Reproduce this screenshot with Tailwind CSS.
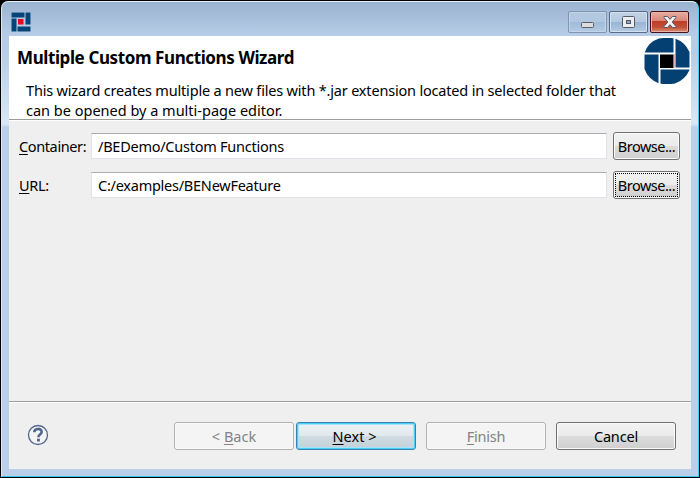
<!DOCTYPE html>
<html lang="en">
<head>
<meta charset="utf-8">
<title>Multiple Custom Functions Wizard</title>
<script src="https://cdn.jsdelivr.net/npm/@tailwindcss/browser@4"></script>
</head>
<body class="h-[478px] w-[700px] overflow-hidden bg-black pl-px pt-px font-['Noto_Sans',sans-serif] text-[14.5px] leading-5 text-black">
<div class="flex h-[476px] w-[698px] flex-col rounded-t-[7px] border-b border-r border-t border-b-[#35c5ee] border-r-[#35d5f4] border-t-[#e8f0f8] border-l border-l-[#dce9f7] px-[7px] pb-[7px]" style="background:linear-gradient(#9ab3d1,#b7cde7 34px,#b7cde7 50px,#d9e7f5 122px,#bad0ea 125px)">
  <div class="flex h-[34px] shrink-0 items-start pl-[2px] pr-[2px]">
    <svg class="mt-[10px]" width="20" height="20" viewBox="0 0 20 20"><path fill="#bdd0e4" fill-opacity=".6" d="M0 0H20V20H0z"/><path fill="#06457a" d="M.5.5h13v5H.5zM14.5.5h5v12h-5zM.5 6.500h5v13h-5zM6.500 14.500h13v5h-13z"/><path fill="#e80920" d="M7 7h5.500v5.500H7z"/></svg>
    <div class="ml-auto mt-[9px] flex gap-[2px]">
      <div class="flex h-[22px] w-[39px] items-center justify-center rounded-[2px] border border-[#7f95b0] shadow-[inset_0_0_0_1px_#c4d5e9]" style="background:linear-gradient(#b4c9e0,#b1c7e0 49%,#9fbad8 50%,#b3cce6)"><svg class="mt-[5px]" width="13" height="6"><rect x=".5" y=".5" width="12" height="5" rx="1" fill="#dcdcdc" stroke="#595e69"/></svg></div>
      <div class="flex h-[22px] w-[39px] items-center justify-center rounded-[2px] border border-[#596b85] shadow-[inset_0_0_0_1px_#d3e1ef]" style="background:linear-gradient(#c3d3e6,#b5c9e0 49%,#98b3d2 50%,#b3cce6)"><svg width="13" height="12"><rect x=".5" y=".5" width="12" height="11" rx="1" fill="#eee" stroke="#535b69"/><rect x="4.500" y="4.500" width="4" height="3" fill="#8aa5c7" stroke="#535b69"/></svg></div>
      <div class="flex h-[22px] w-[39px] items-center justify-center rounded-[2px] border border-[#43121a] shadow-[inset_0_0_0_1px_#eab1a7]" style="background:linear-gradient(#e8aea3,#d98475 45%,#bd3d28 46%,#c34d36 75%,#db8e76)"><svg width="14" height="12" viewBox="0 0 14 12"><path d="M1 .5h3.500L7 3.300 9.500.5H13v1L9.200 6l3.800 4.500v1H9.500L7 8.700 4.500 11.500H1v-1L4.800 6 1 1.500z" fill="#f1f1f1" stroke="#555865"/></svg></div>
    </div>
  </div>
  <main class="flex h-[433px] flex-col bg-[#efefef]">
    <header class="flex h-[84px] shrink-0 justify-between border-b border-[#9d9d9d] bg-white">
      <div class="whitespace-nowrap pl-2 pt-[12px]">
        <h1 class="text-[17px] font-bold leading-5 tracking-[-0.4px]">Multiple Custom Functions Wizard</h1>
        <p class="mt-[12px] pl-[9px] leading-5"><span class="tracking-[-0.185px]">This wizard creates multiple a new files with *.jar extension located in selected folder that</span><br><span>can be opened by a multi-page editor.</span></p>
      </div>
      <svg class="mr-px mt-[2px] shrink-0" width="46" height="46" viewBox="0 0 46 46"><defs><clipPath id="disc"><path d="M15 .5Q23-.8 31 .5 41 4 45.500 14V32Q41 42 31 45.500 23 46.500 15 45.500 4 41 .5 31V15Q4 4 15 .5z"/></clipPath></defs><g clip-path="url(#disc)" fill="#044072"><path d="M0 0H29.500V14.500H0zM31.500 0H46V29.500H31.500zM0 16.500H14.500V46H0zM16.500 31.500H46V46H16.500z"/></g><path d="M16 16.500H29.500V30H16z"/><path d="M30.500 16v14" stroke="#e8b6b9"/></svg>
    </header>
    <section class="flex grow flex-col border-t border-white px-[10px] pt-[11px]">
      <div class="flex h-[28px] items-center"><label class="w-[72px] whitespace-nowrap tracking-[-0.38px]"><u class="underline-offset-2">C</u>ontainer:</label><div class="flex h-[26px] w-[516px] items-center whitespace-nowrap border border-[#e2e3ea] border-t-[#abadb3] bg-white pl-[6px] tracking-[-0.25px]">/BEDemo/Custom Functions</div><button class="ml-[6px] h-[28px] w-[67px] whitespace-nowrap rounded-[3px] border border-[#707070] tracking-[-0.5px] shadow-[inset_0_0_0_1px_#fafafa]" style="background:linear-gradient(#f2f2f2,#ebebeb 49%,#dddddd 50%,#cfcfcf)">Browse...</button></div>
      <div class="mt-[11px] flex h-[28px] items-center"><label class="w-[72px] tracking-[-0.3px]"><u class="underline-offset-2">U</u>RL:</label><div class="flex h-[26px] w-[516px] items-center whitespace-nowrap border border-[#e2e3ea] border-t-[#abadb3] bg-white pl-[6px] tracking-[-0.25px]">C:/examples/BENewFeature</div><button class="ml-[6px] h-[28px] w-[67px] whitespace-nowrap rounded-[3px] border border-[#707070] p-px tracking-[-0.5px] shadow-[inset_0_0_0_1px_#fafafa]" style="background:linear-gradient(#f2f2f2,#ebebeb 49%,#dddddd 50%,#cfcfcf)"><span class="flex h-full items-center justify-center border border-dotted border-black">Browse...</span></button></div>
    </section>
    <footer class="flex h-[68px] shrink-0 items-start border-t border-[#9d9d9d] pr-[15px] pt-[20px] shadow-[inset_0_1px_0_#fff]">
      <svg class="ml-[18px] mt-[2px]" width="22" height="22" viewBox="0 0 22 22"><circle cx="11" cy="11" r="9.500" fill="#f4f4f5" stroke="#53678b" stroke-width="1.300"/><path d="M7.300 8.200c0-4.300 7.400-4.300 7.400-.4 0 2.900-3.300 2.600-3.300 5.400" fill="none" stroke="#53678b" stroke-width="2.600"/><path d="M10 14.700h2.900v2.800H10z" fill="#53678b"/></svg>
      <div class="ml-auto flex">
        <button class="h-[28px] w-[120px] rounded-[3px] border border-[#adb2b5] bg-[#f4f4f4] text-[#838383] shadow-[inset_0_0_0_1px_#fafafa]">&lt; <u class="underline-offset-2">B</u>ack</button>
        <button class="ml-[2px] h-[28px] w-[120px] rounded-[3px] border border-[#3c7fb1] pr-[3px] shadow-[inset_0_0_0_1px_#46d0f6,inset_0_0_0_2px_#a5e4f8]" style="background:linear-gradient(#eef2f4,#e0e8ec 49%,#cfdce2 50%,#c3d0d8)"><u class="underline-offset-2">N</u>ext &gt;</button>
        <button class="ml-[10px] h-[28px] w-[120px] rounded-[3px] border border-[#adb2b5] bg-[#f4f4f4] tracking-[-0.25px] text-[#838383] shadow-[inset_0_0_0_1px_#fafafa]"><u class="underline-offset-2">F</u>inish</button>
        <button class="ml-[10px] h-[28px] w-[120px] rounded-[3px] border border-[#707070] tracking-[-0.15px] shadow-[inset_0_0_0_1px_#fafafa]" style="background:linear-gradient(#f2f2f2,#ebebeb 49%,#dddddd 50%,#cfcfcf)">Cancel</button>
      </div>
    </footer>
  </main>
</div>
</body>
</html>
